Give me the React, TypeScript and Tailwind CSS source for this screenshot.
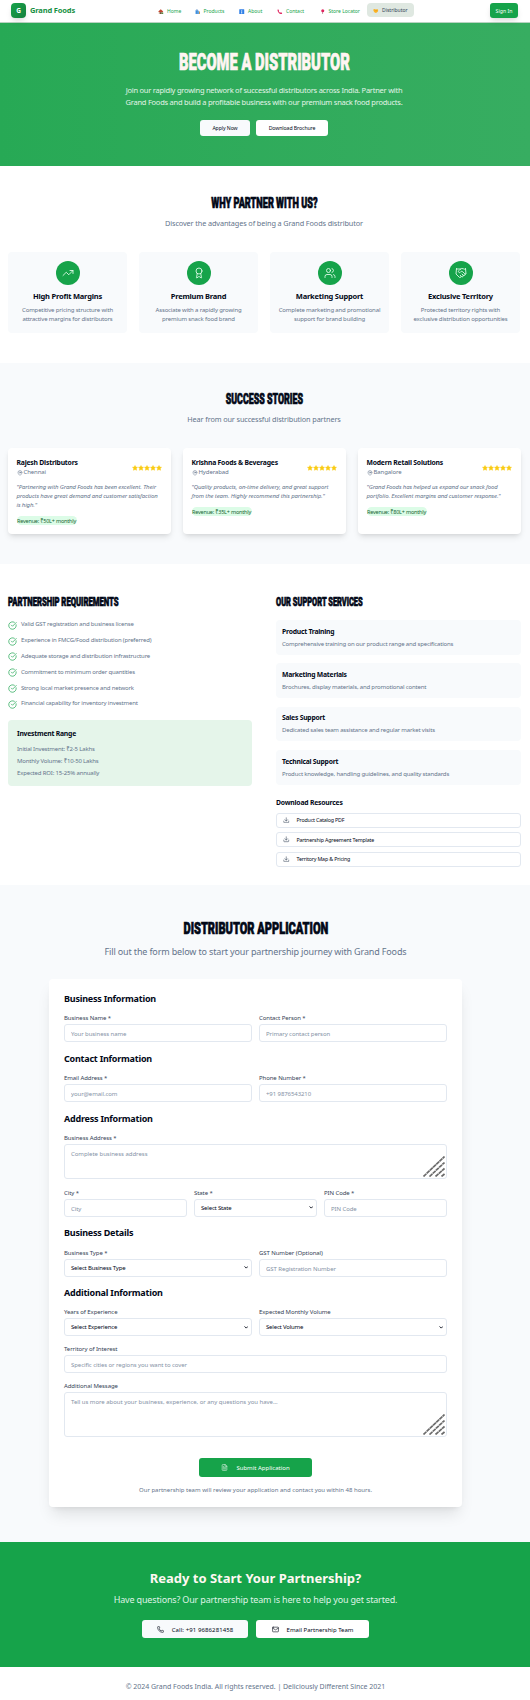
import React from "react";
import {
  TrendingUp, Award, Users, Handshake, MapPin, CircleCheckBig, Download, FileText, Phone, Mail,
} from "lucide-react";

function Condensed({ children, className }: { children: React.ReactNode; className: string }) {
  return (
    <span className={"inline-block whitespace-nowrap font-['Roboto',sans-serif] font-black [-webkit-text-stroke:0.7px_currentColor] " + className}>
      {children}
    </span>
  );
}

const HomeIcon = (
  <>
    <path d="M3 10h14v8H3z" fill="#c9a58f" />
    <path d="M10 1l9 8-2 2H3L1 9z" fill="#c2452f" />
    <path d="M8 12h4v6H8z" fill="#5b3a29" />
    <path d="M13 13h6v5h-6z" fill="#4c8a3f" />
  </>
);
const BagsIcon = (
  <>
    <path d="M2 5h10v13H2z" fill="#3b8fe0" />
    <path d="M4 6c0-6 6-6 6 0" fill="none" stroke="#2463b5" strokeWidth="1.500" />
    <path d="M10 9h9v9h-9z" fill="#d9963f" />
    <path d="M9 8h6v10H9z" fill="#5aa7f0" />
  </>
);
const InfoIcon = (
  <>
    <rect x="1" y="1" width="18" height="18" rx="1" fill="#2f7fe6" />
    <path d="M8.500 8h3v8h-3zM8.500 4h3v2.500h-3z" fill="#fff" />
  </>
);
const PhoneIcon = <path d="M2 3c2-3 5-1 5 2 0 2-1 2 0 4s3 4 5 4 2-1 4 0c3 1 4 3 1 5C12 20 1 12 2 3z" fill="#e0245e" />;
const PinIcon = (
  <>
    <circle cx="10" cy="6" r="5.500" fill="#e0245e" />
    <path d="M9 11h2v8H9z" fill="#9a4a63" />
  </>
);

const nav = [
  { icon: HomeIcon, label: "Home", w: "w-[22.500px]" },
  { icon: BagsIcon, label: "Products", w: "w-[30.500px]" },
  { icon: InfoIcon, label: "About", w: "w-[24px]" },
  { icon: PhoneIcon, label: "Contact", w: "w-[28.500px]" },
  { icon: PinIcon, label: "Store Locator", w: "w-[40px]" },
];

const benefits = [
  { Icon: TrendingUp, title: "High Profit Margins", lines: ["Competitive pricing structure with", "attractive margins for distributors"] },
  { Icon: Award, title: "Premium Brand", lines: ["Associate with a rapidly growing", "premium snack food brand"] },
  { Icon: Users, title: "Marketing Support", lines: ["Complete marketing and promotional", "support for brand building"] },
  { Icon: Handshake, title: "Exclusive Territory", lines: ["Protected territory rights with", "exclusive distribution opportunities"] },
];

const stories = [
  { name: "Rajesh Distributors", city: "Chennai", lines: ["\"Partnering with Grand Foods has been excellent. Their", "products have great demand and customer satisfaction", "is high.\""], revenue: "Revenue: ₹50L+ monthly" },
  { name: "Krishna Foods & Beverages", city: "Hyderabad", lines: ["\"Quality products, on-time delivery, and great support", "from the team. Highly recommend this partnership.\""], revenue: "Revenue: ₹35L+ monthly" },
  { name: "Modern Retail Solutions", city: "Bangalore", lines: ["\"Grand Foods has helped us expand our snack food", "portfolio. Excellent margins and customer response.\""], revenue: "Revenue: ₹80L+ monthly" },
];

const requirements = [
  "Valid GST registration and business license",
  "Experience in FMCG/Food distribution (preferred)",
  "Adequate storage and distribution infrastructure",
  "Commitment to minimum order quantities",
  "Strong local market presence and network",
  "Financial capability for inventory investment",
];

const services = [
  ["Product Training", "Comprehensive training on our product range and specifications"],
  ["Marketing Materials", "Brochures, display materials, and promotional content"],
  ["Sales Support", "Dedicated sales team assistance and regular market visits"],
  ["Technical Support", "Product knowledge, handling guidelines, and quality standards"],
];

function Stars() {
  return (
    <div className="flex">
      {[0, 1, 2, 3, 4].map((i) => (
        <svg key={i} viewBox="0 0 24 24" className="size-[6px] fill-[#facc15] stroke-[#facc15] stroke-2">
          <path d="M12 2l3.1 6.3 6.9 1-5 4.9 1.2 6.8L12 17.8 5.8 21 7 14.200l-5-4.900 6.900-1z" strokeLinejoin="round" />
        </svg>
      ))}
    </div>
  );
}

function SectionTitle({ children }: { children: React.ReactNode }) {
  return <h3 className="text-[9px] leading-[12px] font-bold tracking-[-0.22px] text-[#020817]">{children}</h3>;
}

function Label({ children }: { children: React.ReactNode }) {
  return <label className="relative top-[1px] block h-[8px] text-[6px] leading-[8px] tracking-[-0.08px] whitespace-nowrap text-[#334155]">{children}</label>;
}

function Field({ label, placeholder }: { label: string; placeholder: string }) {
  return (
    <div className="min-w-0 flex-1">
      <Label>{label}</Label>
      <input
        placeholder={placeholder}
        className="mt-[3px] block h-[18px] w-full rounded-[3px] border border-[#e2e8f0] bg-white px-[6px] pt-[2px] text-[6px] tracking-[-0.08px] placeholder:text-[#8592a6]"
      />
    </div>
  );
}

function SelectField({ label, value }: { label: string; value: string }) {
  return (
    <div className="min-w-0 flex-1">
      <Label>{label}</Label>
      <div className="mt-[3px] flex h-[18px] items-center justify-between rounded-[3px] border border-[#e2e8f0] bg-white pr-[3px] pl-[6px] text-[6px] tracking-[-0.18px] text-[#020817]">
        <span className="pt-[1px]">{value}</span>
        <svg viewBox="0 0 8 8" className="size-[4.500px] fill-none stroke-[#020817] stroke-[1.6]"><path d="M1 2.500l3 3 3-3" /></svg>
      </div>
    </div>
  );
}

function Area({ label, placeholder, size }: { label: string; placeholder: string; size: string }) {
  return (
    <div>
      <Label>{label}</Label>
      <div className={"relative mt-[3px] rounded-[3px] border border-[#e2e8f0] bg-white " + size}>
        <textarea placeholder={placeholder} className="block h-full w-full resize-none px-[6px] pt-[5px] text-[6px] leading-[9px] tracking-[-0.03px] placeholder:text-[#8592a6]" />
        <svg viewBox="0 0 22 21" className="absolute right-[1px] bottom-[1px] h-[21px] w-[22px] fill-none stroke-[#6b6b6b] stroke-[1.7]">
          <path d="M0.500 20.500L21.500 0.500M6.500 20.500L21.500 6.500M12.500 20.500L21.500 12.500M18.500 20.500L21.500 18" strokeDasharray="4 0.400" />
        </svg>
      </div>
    </div>
  );
}

export default function App() {
  return (
    <div className="h-[1700px] w-[530px] overflow-hidden bg-white font-['Noto_Sans','Liberation_Sans',sans-serif] text-[#020817]">
      <header className="flex h-[23px] items-start border-b border-[#b9d3c2] pt-[3px] pl-[11px]">
        <div className="flex size-[15px] items-center justify-center rounded-[4px] bg-linear-to-br from-[#16a34a] to-[#15803d] text-[6.500px] font-bold text-white shadow-md">G</div>
        <div className="ml-[4px] w-[116px] text-[7.500px] leading-[15px] font-bold tracking-[-0.15px] whitespace-nowrap text-[#168f43]">Grand Foods</div>
        <nav className="flex h-[17px] items-center gap-[14px] pl-[12px] text-[5px] whitespace-nowrap text-[#16a34a]">
          {nav.map((n) => (
            <a key={n.label} className={"flex items-center gap-[3.500px] " + n.w}>
              <svg viewBox="0 0 20 20" className="size-[5.500px] shrink-0">{n.icon}</svg>
              <span>{n.label}</span>
            </a>
          ))}
        </nav>
        <div className="ml-[7.500px] flex h-[14px] w-[47px] items-center gap-[3.500px] rounded-[4px] bg-[#dfe8e1] pt-[2px] pl-[6px] text-[5px] text-[#334155]">
          <svg viewBox="0 0 20 20" className="size-[5.500px] shrink-0"><path d="M1 5l5-1 4 2 5-2 4 3-2 7-6 4-5-2-4-5z" fill="#fbb324" /><path d="M7 9l4-2 5 5" fill="none" stroke="#d98a12" strokeWidth="1.500" /></svg>
          <span>Distributor</span>
        </div>
        <button className="ml-[76px] h-[15px] w-[28px] rounded-[3px] bg-[#16a34a] pt-[2px] text-[5.200px] whitespace-nowrap text-white shadow-md">Sign In</button>
      </header>

      <section className="flex h-[143px] flex-col items-center bg-linear-to-r from-[#27a955] to-[#37ad61] pt-[30px] pr-[2px] text-center">
        <h1 className="flex h-[20px] justify-center text-[23px] leading-[20px] text-[#fff5f2]"><Condensed className="scale-x-[0.64]">BECOME A DISTRIBUTOR</Condensed></h1>
        <p className="mt-[11px] text-[7.500px] leading-[12px] tracking-[-0.240px] whitespace-nowrap text-[#e3f4e8]">
          Join our rapidly growing network of successful distributors across India. Partner with<br />
          Grand Foods and build a profitable business with our premium snack food products.
        </p>
        <div className="mt-[12px] flex gap-[6px] text-[5.200px] tracking-[-0.1px] text-[#020817]">
          <button className="h-[16px] w-[50px] rounded-[3px] bg-[#f8fafc] pt-[2px]">Apply Now</button>
          <button className="h-[16px] w-[72px] rounded-[3px] bg-white pt-[2px]">Download Brochure</button>
        </div>
      </section>

      <section className="flex h-[197px] flex-col items-center pt-[32px] pr-[2px]">
        <h2 className="flex h-[12px] justify-center text-[14.500px] leading-[12px]"><Condensed className="scale-x-[0.63]">WHY PARTNER WITH US?</Condensed></h2>
        <p className="mt-[7px] text-[7.300px] leading-[12px] tracking-[-0.11px] whitespace-nowrap text-[#64748b]">Discover the advantages of being a Grand Foods distributor</p>
        <div className="mt-[23px] flex gap-[12px]">
          {benefits.map(({ Icon, title, lines }) => (
            <div key={title} className="flex h-[81px] w-[119px] flex-col items-center rounded-[4px] bg-[#f8fafc] pt-[9px]">
              <div className="flex size-[24px] shrink-0 items-center justify-center rounded-full bg-[#16a34a]">
                <Icon className="size-[12px] text-[#e8fff0]" strokeWidth={1.700} />
              </div>
              <h3 className="mt-[6px] text-[7.500px] leading-[10px] font-bold tracking-[-0.21px] whitespace-nowrap">{title}</h3>
              <p className="mt-[5px] text-center text-[6px] leading-[9px] tracking-[-0.15px] whitespace-nowrap text-[#64748b]">{lines[0]}<br />{lines[1]}</p>
            </div>
          ))}
        </div>
      </section>

      <section className="flex h-[201px] flex-col items-center bg-[#f8fafc] pt-[31px] pr-[2px]">
        <h2 className="flex h-[12px] justify-center text-[14.500px] leading-[12px]"><Condensed className="scale-x-[0.61]">SUCCESS STORIES</Condensed></h2>
        <p className="mt-[7px] text-[7.300px] leading-[12px] tracking-[-0.12px] whitespace-nowrap text-[#64748b]">Hear from our successful distribution partners</p>
        <div className="mt-[23px] flex gap-[12px]">
          {stories.map((s) => (
            <article key={s.name} className="h-[86px] w-[163px] rounded-[4px] bg-white px-[9px] pt-[10px] shadow-md">
              <div className="flex items-center justify-between">
                <div>
                  <h3 className="text-[6.800px] leading-[10px] font-bold tracking-[-0.2px] whitespace-nowrap">{s.name}</h3>
                  <div className="flex h-[9px] items-center gap-[1px] text-[6px] leading-[9px] tracking-[-0.1px] text-[#64748b]"><MapPin className="size-[6px]" strokeWidth={2} />{s.city}</div>
                </div>
                <Stars />
              </div>
              <p className="mt-[5.500px] text-[6px] leading-[9px] tracking-[-0.12px] whitespace-nowrap text-[#64748b] italic">
                {s.lines.map((l) => <span key={l} className="block">{l}</span>)}
              </p>
              <div className="mt-[6.500px] h-[9px] w-[60px] rounded-[4.500px] bg-[#dcfce7] pt-[1px] text-center text-[5.500px] leading-[8px] tracking-[-0.2px] whitespace-nowrap text-[#166534]">{s.revenue}</div>
            </article>
          ))}
        </div>
      </section>

      <section className="flex h-[321px] gap-[24px] px-[8px] pt-[33px]">
        <div className="w-[244px]">
          <h2 className="flex h-[10px] text-[12px] leading-[10px]"><Condensed className="origin-left scale-x-[0.64]">PARTNERSHIP REQUIREMENTS</Condensed></h2>
          <ul className="mt-[10px]">
            {requirements.map((r) => (
              <li key={r} className="flex h-[15.800px] items-center gap-[4px] text-[6px] tracking-[-0.17px] whitespace-nowrap text-[#64748b]">
                <CircleCheckBig className="relative top-[0.500px] size-[9px] text-[#16a34a]" strokeWidth={1.800} />{r}
              </li>
            ))}
          </ul>
          <div className="mt-[8px] h-[66px] rounded-[4px] bg-[#e5f5ea] px-[9px] pt-[9.500px]">
            <h3 className="text-[6.800px] leading-[10px] font-bold tracking-[-0.22px]">Investment Range</h3>
            <div className="mt-[4px] text-[6px] leading-[12px] tracking-[-0.17px] text-[#64748b]">
              <p>Initial Investment: ₹2-5 Lakhs</p>
              <p>Monthly Volume: ₹10-50 Lakhs</p>
              <p>Expected ROI: 15-25% annually</p>
            </div>
          </div>
        </div>
        <div className="w-[245px]">
          <h2 className="flex h-[10px] text-[12px] leading-[10px]"><Condensed className="origin-left scale-x-[0.62]">OUR SUPPORT SERVICES</Condensed></h2>
          <div className="mt-[13px] flex flex-col gap-[8.900px]">
            {services.map(([t, d]) => (
              <div key={t} className="h-[34.500px] rounded-[4px] bg-[#f8fafc] px-[6px] pt-[6.500px]">
                <h3 className="text-[6.800px] leading-[10px] font-bold tracking-[-0.24px]">{t}</h3>
                <p className="mt-[3px] text-[6px] leading-[9px] tracking-[-0.17px] whitespace-nowrap text-[#64748b]">{d}</p>
              </div>
            ))}
          </div>
          <h3 className="mt-[13px] text-[6.800px] leading-[10px] font-bold tracking-[-0.2px]">Download Resources</h3>
          <div className="mt-[5px] flex flex-col gap-[4.500px]">
            {["Product Catalog PDF", "Partnership Agreement Template", "Territory Map & Pricing"].map((d) => (
              <button key={d} className="flex h-[15px] items-center gap-[7px] rounded-[3px] border border-[#e2e8f0] pl-[6px] text-[5.300px] tracking-[-0.17px]">
                <Download className="size-[6.500px] text-[#334155]" strokeWidth={2} /><span className="pt-[2px]">{d}</span>
              </button>
            ))}
          </div>
        </div>
      </section>

      <section className="h-[657px] bg-[#f8fafc] pt-[37px] pr-[19px]">
        <div className="flex flex-col items-center">
          <h2 className="flex h-[14px] justify-center text-[16px] leading-[14px]"><Condensed className="scale-x-[0.69]">DISTRIBUTOR APPLICATION</Condensed></h2>
          <p className="mt-[8.500px] text-[9px] leading-[14px] tracking-[-0.15px] whitespace-nowrap text-[#64748b]">Fill out the form below to start your partnership journey with Grand Foods</p>
          <form className="mt-[20.500px] h-[528px] w-[413px] rounded-[4px] bg-white px-[15px] pt-[13.500px] shadow-lg">
            <SectionTitle>Business Information</SectionTitle>
            <div className="mt-[8.500px] flex gap-[7px]"><Field label="Business Name *" placeholder="Your business name" /><Field label="Contact Person *" placeholder="Primary contact person" /></div>
            <div className="h-[10.500px]" />
            <SectionTitle>Contact Information</SectionTitle>
            <div className="mt-[8.500px] flex gap-[7px]"><Field label="Email Address *" placeholder="your@email.com" /><Field label="Phone Number *" placeholder="+91 9876543210" /></div>
            <div className="h-[10.500px]" />
            <SectionTitle>Address Information</SectionTitle>
            <div className="mt-[8.500px]"><Area label="Business Address *" placeholder="Complete business address" size="h-[35px]" /></div>
            <div className="mt-[8.500px] flex gap-[7px]"><Field label="City *" placeholder="City" /><SelectField label="State *" value="Select State" /><Field label="PIN Code *" placeholder="PIN Code" /></div>
            <div className="h-[10.500px]" />
            <SectionTitle>Business Details</SectionTitle>
            <div className="mt-[8.500px] flex gap-[7px]"><SelectField label="Business Type *" value="Select Business Type" /><Field label="GST Number (Optional)" placeholder="GST Registration Number" /></div>
            <div className="h-[10px]" />
            <SectionTitle>Additional Information</SectionTitle>
            <div className="mt-[8.500px] flex gap-[7px]"><SelectField label="Years of Experience" value="Select Experience" /><SelectField label="Expected Monthly Volume" value="Select Volume" /></div>
            <div className="mt-[8px] flex"><Field label="Territory of Interest" placeholder="Specific cities or regions you want to cover" /></div>
            <div className="mt-[8px]"><Area label="Additional Message" placeholder="Tell us more about your business, experience, or any questions you have..." size="h-[45px]" /></div>
            <button className="mx-auto mt-[21px] flex h-[19px] w-[113px] items-center justify-center gap-[8px] rounded-[3px] bg-[#16a34a] text-[6px] text-white">
              <FileText className="size-[7px]" strokeWidth={1.800} /><span className="pt-[2px]">Submit Application</span>
            </button>
            <p className="mt-[8px] text-center text-[6px] leading-[10px] whitespace-nowrap text-[#64748b]">Our partnership team will review your application and contact you within 48 hours.</p>
          </form>
        </div>
      </section>

      <section className="flex h-[125px] flex-col items-center bg-[#16a34a] pt-[28px] pr-[19px]">
        <h2 className="text-[13px] leading-[16px] font-bold whitespace-nowrap text-[#fff8f2]">Ready to Start Your Partnership?</h2>
        <p className="mt-[6.500px] text-[9px] leading-[14px] tracking-[-0.17px] whitespace-nowrap text-[#dff3e5]">Have questions? Our partnership team is here to help you get started.</p>
        <div className="mt-[13.500px] flex gap-[8px] text-[6px] text-[#020817]">
          <button className="flex h-[18px] w-[106px] items-center justify-center gap-[8px] rounded-[3px] bg-[#f8fafc]"><Phone className="size-[7px]" /><span className="pt-[2px] tracking-[0.1px]">Call: +91 9686281458</span></button>
          <button className="flex h-[18px] w-[113px] items-center justify-center gap-[8px] rounded-[3px] bg-white"><Mail className="size-[7px]" /><span className="pt-[2px]">Email Partnership Team</span></button>
        </div>
      </section>

      <footer className="pt-[15px] pr-[19px] text-center text-[7px] leading-[10px] tracking-[-0.03px] whitespace-nowrap text-[#64748b]">
        © 2024 Grand Foods India. All rights reserved. | Deliciously Different Since 2021
      </footer>
    </div>
  );
}
